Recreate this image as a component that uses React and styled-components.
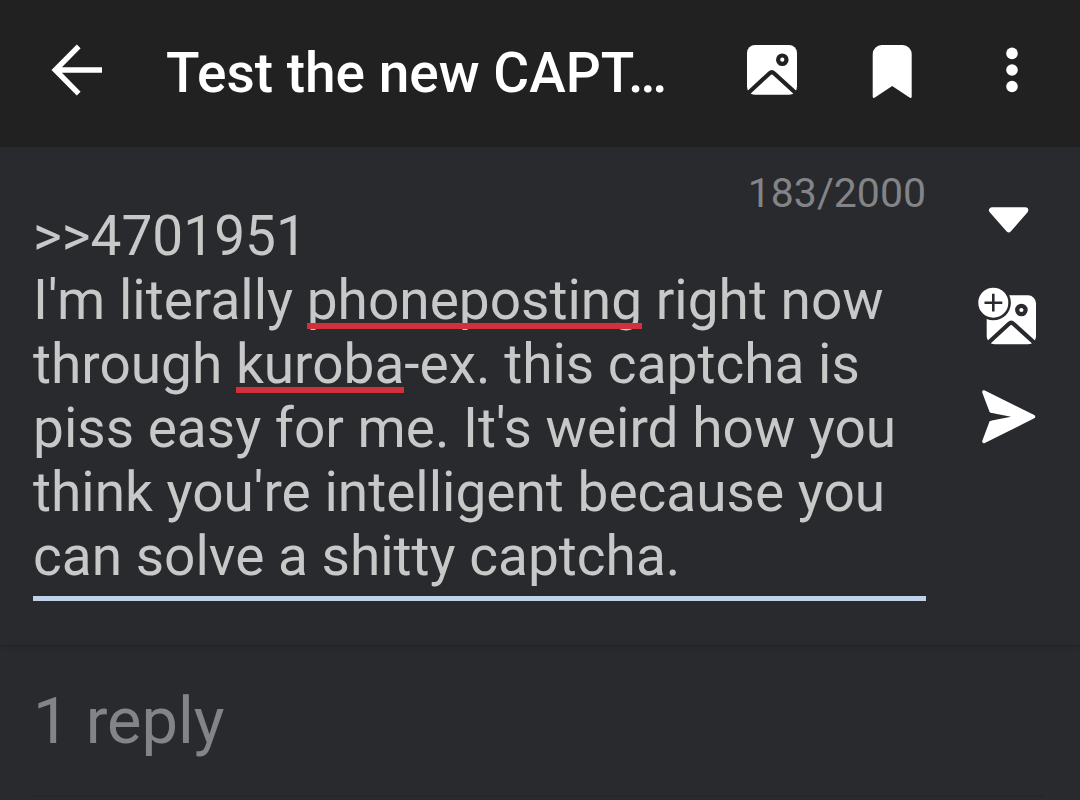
import { useState } from 'react';
import styled, { createGlobalStyle } from 'styled-components';

const colors = {
  bar: '#212121',
  panel: '#292a2e',
  text: '#c7c8c7',
  muted: '#838488',
  accent: '#bfd2e8',
  error: '#d2303a',
};

const GlobalStyle = createGlobalStyle`
  * {
    box-sizing: border-box;
  }

  body {
    margin: 0;
    background: ${colors.panel};
    color: ${colors.text};
    font-family: Roboto, "Liberation Sans", sans-serif;
  }
`;

const Toolbar = styled.header`
  display: flex;
  align-items: center;
  gap: 12px;
  padding: 0 8px 7px 0;
  background: ${colors.bar};
`;

const IconButton = styled.button`
  display: flex;
  flex: none;
  align-items: center;
  justify-content: center;
  width: ${({ $width }) => $width}px;
  height: ${({ $height }) => $height}px;
  padding: 0;
  border: none;
  background: none;
  color: white;
  cursor: pointer;
`;

const Icon = styled.svg.attrs({ viewBox: '0 0 60 60', 'aria-hidden': true })`
  width: 60px;
  height: 60px;
  fill: currentColor;
`;

const Title = styled.h1`
  flex: 1;
  min-width: 0;
  margin: 0;
  padding-top: 6px;
  overflow: hidden;
  color: white;
  font-size: 55px;
  font-weight: 500;
  line-height: 64px;
  white-space: nowrap;
`;

const Actions = styled.div`
  display: flex;
`;

const ReplyForm = styled.form`
  display: flex;
  gap: 33px;
  padding: 0 23px 44px 33px;
  box-shadow: 0 2px 4px rgba(0, 0, 0, 0.16);
`;

const Field = styled.div`
  flex: 1;
  min-width: 0;
  padding-top: 35px;
`;

const Counter = styled.label`
  display: block;
  color: ${colors.muted};
  font-size: 41px;
  line-height: 22px;
  text-align: right;
`;

const Editor = styled.div`
  display: grid;
  padding-bottom: 8px;
  border-bottom: 5px solid ${colors.accent};
  font-size: 55px;
  line-height: 64px;

  > * {
    grid-area: 1 / 1;
    min-width: 0;
    white-space: pre-wrap;
    overflow-wrap: break-word;
  }
`;

const Comment = styled.textarea`
  width: 100%;
  height: 100%;
  margin: 0;
  padding: 0;
  overflow: hidden;
  border: none;
  outline: none;
  background: none;
  color: inherit;
  font: inherit;
  resize: none;
`;

// Hidden copy of the comment: it grows the editor and carries the spelling marks
const SpellLayer = styled.div`
  z-index: 1;
  visibility: hidden;
  pointer-events: none;
`;

const Misspelled = styled.span`
  position: relative;

  &::after {
    content: '';
    position: absolute;
    right: 0;
    bottom: 3px;
    left: 0;
    height: 6px;
    background: ${colors.error};
    visibility: visible;
  }
`;

const SideActions = styled.div`
  display: flex;
  flex-direction: column;
  padding-top: 23px;
`;

const Replies = styled.section`
  margin: 0 35px 0 33px;
  padding: 37px 0 35px;
  border-bottom: 2px solid #26272a;
`;

const ReplyCount = styled.h2`
  margin: 0;
  color: ${colors.muted};
  font-size: 65px;
  font-weight: 400;
  line-height: 78px;
`;

const BackIcon = () => (
  <Icon>
    <path
      d="M31.7 6.3 8.3 30l23.4 23.7M9 30h46"
      fill="none"
      stroke="currentColor"
      strokeWidth="5.4"
    />
  </Icon>
);

const ImageIcon = () => (
  <Icon>
    <rect x="5" y="5" width="50" height="49.8" rx="8" />
    <g
      fill="none"
      stroke={colors.bar}
      strokeWidth="4.2"
      strokeLinejoin="round"
    >
      <circle cx="40.3" cy="19.7" r="4.2" />
      <path d="M3 56 27.6 33.2Q29.8 31.2 32 33.2L57 56" />
    </g>
  </Icon>
);

const BookmarkIcon = () => (
  <Icon>
    <path d="M19.7 5h21a9 9 0 0 1 9 9v42.4q0 2.4-2.2 1.2L30.2 46 12.9 57.6q-2.2 1.2-2.2-1.2V14a9 9 0 0 1 9-9z" />
  </Icon>
);

const MoreIcon = () => (
  <Icon>
    <circle cx="30" cy="13.4" r="5.8" />
    <circle cx="30" cy="30" r="5.8" />
    <circle cx="30" cy="46.5" r="5.8" />
  </Icon>
);

const CaretIcon = () => (
  <Icon>
    <path
      d="M14 21.3h33.3L30.7 40.3z"
      stroke="currentColor"
      strokeWidth="6"
      strokeLinejoin="round"
    />
  </Icon>
);

const AddImageIcon = () => (
  <Icon>
    <rect x="8.7" y="8.3" width="49.3" height="49" rx="8" />
    <g
      fill="none"
      stroke={colors.panel}
      strokeWidth="4.2"
      strokeLinejoin="round"
    >
      <circle cx="43.4" cy="23" r="4.2" />
      <path d="M6.8 59 31 36.8Q33.2 34.8 35.4 36.8L60 59" />
    </g>
    <circle cx="15.3" cy="15.7" r="17.6" fill={colors.panel} />
    <circle cx="15.3" cy="15.7" r="15" />
    <path
      d="M6.5 15.7h17.8M15.3 6.8v17.8"
      stroke={colors.panel}
      strokeWidth="2.6"
    />
  </Icon>
);

const SendIcon = () => (
  <Icon>
    <path
      d="M6 7 55.4 31.7 6 56.4 13.2 37.2 33 31.7 13.2 26.2z"
      stroke="currentColor"
      strokeWidth="3.6"
      strokeLinejoin="round"
    />
    <path d="M10 27.2 33 31.7 10 36.2z" fill={colors.panel} />
  </Icon>
);

const draft = `>>4701951
I'm literally phoneposting right now through kuroba-ex. this captcha is piss easy for me. It's weird how you think you're intelligent because you can solve a shitty captcha.`;

const unknownWords = /(phoneposting|kuroba)/;

const App = () => {
  const [comment, setComment] = useState(draft);

  return (
    <>
      <GlobalStyle />
      <Toolbar>
        <IconButton $width={154} $height={140} aria-label="Back">
          <BackIcon />
        </IconButton>
        <Title>Test the new CAPT…</Title>
        <Actions>
          <IconButton $width={120} $height={140} aria-label="Album">
            <ImageIcon />
          </IconButton>
          <IconButton $width={120} $height={140} aria-label="Bookmark">
            <BookmarkIcon />
          </IconButton>
          <IconButton $width={120} $height={140} aria-label="More options">
            <MoreIcon />
          </IconButton>
        </Actions>
      </Toolbar>
      <main>
        <ReplyForm onSubmit={e => e.preventDefault()}>
          <Field>
            <Counter htmlFor="comment">183/2000</Counter>
            <Editor>
              <Comment
                id="comment"
                rows={1}
                spellCheck={false}
                value={comment}
                onChange={e => setComment(e.target.value)}
              />
              <SpellLayer aria-hidden="true">
                {comment
                  .split(unknownWords)
                  .map((part, i) =>
                    i % 2 ? <Misspelled key={i}>{part}</Misspelled> : part
                  )}
              </SpellLayer>
            </Editor>
          </Field>
          <SideActions>
            <IconButton
              type="button"
              $width={98}
              $height={98}
              aria-label="Expand"
            >
              <CaretIcon />
            </IconButton>
            <IconButton
              type="button"
              $width={98}
              $height={98}
              aria-label="Attach image"
            >
              <AddImageIcon />
            </IconButton>
            <IconButton $width={98} $height={98} aria-label="Send">
              <SendIcon />
            </IconButton>
          </SideActions>
        </ReplyForm>
        <Replies>
          <ReplyCount>1 reply</ReplyCount>
        </Replies>
      </main>
    </>
  );
};

export default App;
